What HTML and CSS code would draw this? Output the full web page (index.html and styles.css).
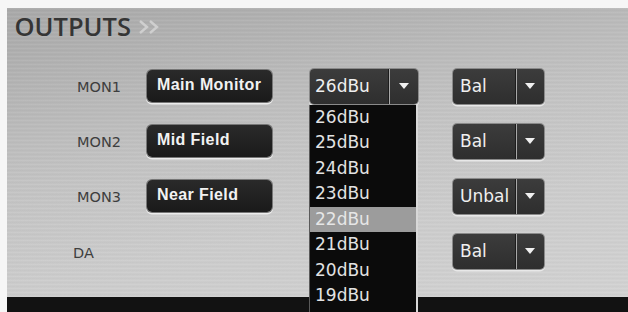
FILE: index.html
```html
<!DOCTYPE html>
<html>
<head>
<meta charset="utf-8">
<link rel="stylesheet" href="styles.css">
</head>
<body>
<div class="panel">
  <div class="header">
    <span class="title">OUTPUTS</span>
    <svg class="chev" width="26" height="16" viewBox="0 0 26 16">
      <path d="M2 2 L9 8 L2 14" fill="none" stroke="#cfcfcf" stroke-width="2.4"/>
      <path d="M12 2 L19 8 L12 14" fill="none" stroke="#cfcfcf" stroke-width="2.4"/>
    </svg>
  </div>
  <div class="rows">
    <div class="row">
      <span class="label">MON1</span>
      <span class="name">Main Monitor</span>
      <div class="select level">
        <span class="val">26dBu</span><span class="arrow"></span>
        <ul class="list">
          <li>26dBu</li><li>25dBu</li><li>24dBu</li><li>23dBu</li>
          <li class="hl">22dBu</li><li>21dBu</li><li>20dBu</li><li>19dBu</li>
        </ul>
      </div>
      <div class="select bal"><span class="val">Bal</span><span class="arrow"></span></div>
    </div>
    <div class="row">
      <span class="label">MON2</span>
      <span class="name">Mid Field</span>
      <div class="select level ghost"></div>
      <div class="select bal"><span class="val">Bal</span><span class="arrow"></span></div>
    </div>
    <div class="row">
      <span class="label">MON3</span>
      <span class="name">Near Field</span>
      <div class="select level ghost"></div>
      <div class="select bal"><span class="val">Unbal</span><span class="arrow"></span></div>
    </div>
    <div class="row">
      <span class="label da">DA</span>
      <span class="name ghost"></span>
      <div class="select level ghost"></div>
      <div class="select bal"><span class="val">Bal</span><span class="arrow"></span></div>
    </div>
  </div>
</div>
<div class="bottombar"></div>
</body>
</html>
```
FILE: styles.css
```css
html, body {
  margin: 0;
  padding: 0;
  background: #f6f6f6;
  width: 628px;
  height: 312px;
  overflow: hidden;
}
.panel {
  margin: 8px 0 0 7px;
  height: 289px;
  position: relative;
  background:
    repeating-linear-gradient(180deg, rgba(255,255,255,0.05) 0px, rgba(255,255,255,0.05) 1px, rgba(0,0,0,0.03) 2px, rgba(0,0,0,0) 4px),
    linear-gradient(170deg, #a9a9a9 0%, #b6b6b6 22%, #c4c4c4 45%, #cdcdcd 70%, #d3d3d3 100%);
}
.header {
  display: flex;
  align-items: center;
  height: 30px;
  padding: 2.5px 0 0 7.5px;
}
.title {
  font-family: "Open Sans", sans-serif;
  font-size: 25.5px;
  font-weight: 600;
  line-height: 30px;
  color: #353535;
}
.chev {
  margin-left: 7px;
  margin-top: 2px;
}
.rows {
  margin-top: 18px;
  display: flex;
  flex-direction: column;
}
.row {
  height: 55px;
  display: flex;
  align-items: center;
}
.label {
  width: 70px;
  padding-left: 70px;
  font-family: "DejaVu Sans", sans-serif;
  font-size: 14.5px;
  color: #3e3e3e;
  margin-top: 2px;
}
.label.da {
  padding-left: 66px;
  width: 74px;
  margin-top: 4px;
}
.name {
  box-sizing: border-box;
  width: 125px;
  height: 32px;
  border-radius: 5px;
  background: linear-gradient(180deg, #2a2a2a 0%, #1a1a1a 100%);
  box-shadow: 0 0 0 1px #777, 0 1.5px 0 1px #ececec;
  padding-left: 10px;
  font-family: "Liberation Sans", sans-serif;
  font-weight: bold;
  font-size: 16px;
  letter-spacing: 0.4px;
  line-height: 30px;
  color: #f2f2f2;
  white-space: nowrap;
  overflow: hidden;
}
.name.ghost {
  visibility: hidden;
}
.select {
  box-sizing: border-box;
  height: 35px;
  display: flex;
  align-items: stretch;
  border-radius: 4px;
  background: linear-gradient(180deg, #3c3c3c 0%, #2e2e2e 100%);
  box-shadow: 0 0 0 1px #8a8a8a, 0 1.5px 0 1px #e8e8e8;
  font-family: "DejaVu Sans", sans-serif;
  font-size: 17px;
  color: #efefef;
  position: relative;
}
.select .val {
  flex: 1;
  line-height: 35px;
  border-right: 1px solid #1c1c1c;
  box-shadow: 1px 0 0 #a8a8a8;
}
.select .arrow {
  display: flex;
  align-items: center;
  justify-content: center;
}
.select .arrow::before {
  content: "";
  border-left: 5px solid transparent;
  border-right: 5px solid transparent;
  border-top: 6px solid #f0f0f0;
}
.level {
  width: 108px;
  margin-left: 38px;
}
.level .val {
  padding-left: 5px;
}
.level .arrow {
  width: 29px;
}
.level.ghost {
  visibility: hidden;
}
.bal {
  width: 91px;
  margin-left: 35px;
}
.bal .val {
  padding-left: 7px;
}
.bal .arrow {
  width: 28px;
}
.list {
  position: absolute;
  left: -1px;
  top: 36px;
  width: 109px;
  margin: 0;
  padding: 0;
  list-style: none;
  background: #0b0b0b;
  border-left: 1px solid #5a5a5a;
  border-right: 2px solid #d8d8d8;
  box-sizing: border-box;
  height: 215px;
  z-index: 5;
}
.list li {
  height: 25.5px;
  line-height: 25.5px;
  padding-left: 5px;
  color: #e2e2e2;
  font-size: 17px;
}
.list li.hl {
  background: #9c9c9c;
  color: #e6e6e6;
}
.bottombar {
  margin-left: 7px;
  height: 15px;
  background: #121212;
}
```
